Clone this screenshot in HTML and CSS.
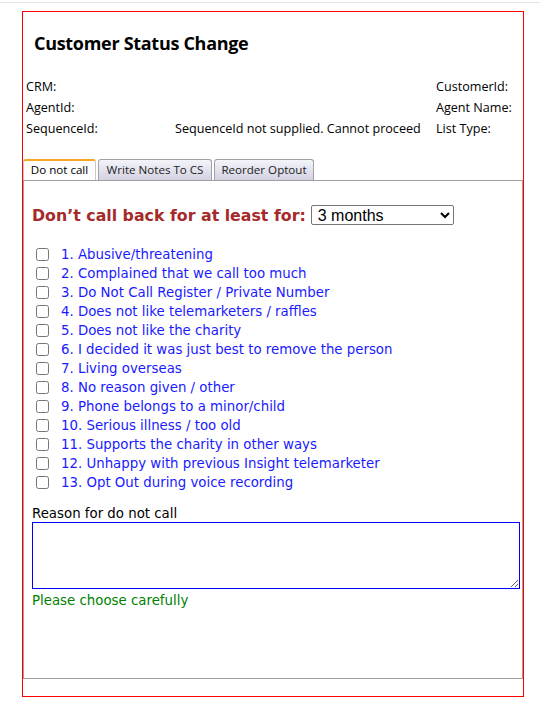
FILE: index.html
```html
<!DOCTYPE html>
<html>
<head>
<meta charset="utf-8">
<title>Customer Status Change</title>
<link rel="stylesheet" href="styles.css">
</head>
<body>
<div class="topline"></div>
<div class="frame">
  <h1 class="title">Customer Status Change</h1>
  <div class="info">
    <div class="info-left">
      <div class="row"><span class="lbl">CRM:</span><span class="val"></span></div>
      <div class="row"><span class="lbl">AgentId:</span><span class="val"></span></div>
      <div class="row"><span class="lbl">SequenceId:</span><span class="val">SequenceId not supplied. Cannot proceed</span></div>
    </div>
    <div class="info-right">
      <div class="row">CustomerId:</div>
      <div class="row">Agent Name:</div>
      <div class="row">List Type:</div>
    </div>
  </div>
  <div class="tabs">
    <div class="tab active">Do not call</div>
    <div class="tab">Write Notes To CS</div>
    <div class="tab">Reorder Optout</div>
  </div>
  <div class="panel">
    <div class="period">
      <span class="period-label">Don’t call back for at least for:</span>
      <select class="period-select"><option>3 months</option></select>
    </div>
    <ul class="reasons">
      <li><input type="checkbox"><span>1. Abusive/threatening</span></li>
      <li><input type="checkbox"><span>2. Complained that we call too much</span></li>
      <li><input type="checkbox"><span>3. Do Not Call Register / Private Number</span></li>
      <li><input type="checkbox"><span>4. Does not like telemarketers / raffles</span></li>
      <li><input type="checkbox"><span>5. Does not like the charity</span></li>
      <li><input type="checkbox"><span>6. I decided it was just best to remove the person</span></li>
      <li><input type="checkbox"><span>7. Living overseas</span></li>
      <li><input type="checkbox"><span>8. No reason given / other</span></li>
      <li><input type="checkbox"><span>9. Phone belongs to a minor/child</span></li>
      <li><input type="checkbox"><span>10. Serious illness / too old</span></li>
      <li><input type="checkbox"><span>11. Supports the charity in other ways</span></li>
      <li><input type="checkbox"><span>12. Unhappy with previous Insight telemarketer</span></li>
      <li><input type="checkbox"><span>13. Opt Out during voice recording</span></li>
    </ul>
    <div class="reason-label">Reason for do not call</div>
    <textarea class="reason-text"></textarea>
    <div class="hint">Please choose carefully</div>
  </div>
</div>
</body>
</html>
```
FILE: styles.css
```css
html, body {
  margin: 0;
  padding: 0;
  background: #ffffff;
}
body {
  font-family: "Open Sans", "Noto Sans", sans-serif;
  color: #000;
}
.topline {
  margin-top: 2px;
  width: 540px;
  border-top: 1px solid #e3e3e3;
}
.frame {
  box-sizing: border-box;
  width: 502px;
  height: 686px;
  margin: 8px 0 0 22px;
  border: 1px solid #ff0000;
  display: flex;
  flex-direction: column;
}
.title {
  margin: 19px 0 0 11px;
  font-family: "Open Sans", sans-serif;
  font-size: 18px;
  font-weight: 700;
  line-height: 24px;
  letter-spacing: -0.3px;
}
.info {
  display: flex;
  margin: 21px 0 0 3px;
  font-size: 12.6px;
}
.info-left {
  width: 410px;
}
.row {
  display: flex;
  height: 21px;
  line-height: 21px;
  white-space: nowrap;
}
.lbl {
  width: 149px;
}
.tabs {
  display: flex;
  gap: 2px;
  margin-top: 20px;
  height: 21px;
  font-family: "Open Sans", sans-serif;
  font-size: 11.6px;
}
.tab {
  box-sizing: border-box;
  height: 21px;
  line-height: 19px;
  text-align: center;
  white-space: nowrap;
  border: 1px solid #a0a0a8;
  border-bottom: none;
  border-radius: 3px 3px 0 0;
  background: linear-gradient(#f4f4fa, #d2d2e2);
  color: #222;
}
.tab.active {
  background: #fff;
  border-color: #c8c8c8;
  border-top: 2px solid #f5a623;
  line-height: 18px;
  color: #000;
}
.tab:nth-child(1) { width: 73px; }
.tab:nth-child(2) { width: 114px; }
.tab:nth-child(3) { width: 100px; }
.panel {
  box-sizing: border-box;
  height: 499px;
  border: 1px solid #a0a0a0;
  padding: 0 2px 0 8px;
  font-family: "DejaVu Sans", Verdana, sans-serif;
  font-size: 13.33px;
}
.period {
  display: flex;
  align-items: center;
  margin-top: 24px;
}
.period-label {
  color: #a52a2a;
  font-weight: 700;
  font-size: 15.8px;
  margin-right: 5px;
}
.period-select {
  width: 143px;
  height: 20px;
  font-family: "Liberation Sans", Arial, sans-serif;
  font-size: 16px;
  border: 1px solid #767676;
  border-radius: 2px;
  background: #fff;
  color: #000;
  padding: 0 0 0 2px;
}
.reasons {
  list-style: none;
  margin: 20px 0 0 0;
  padding: 0;
}
.reasons li {
  display: flex;
  align-items: center;
  height: 19px;
  color: #1a1aff;
}
.reasons input {
  width: 13px;
  height: 13px;
  margin: 0 12px 0 4px;
}
.reason-label {
  margin-top: 14px;
  line-height: 16px;
}
.reason-text {
  display: block;
  box-sizing: border-box;
  width: 488px;
  height: 67px;
  margin: 0;
  border: 1px solid #0000ff;
  resize: vertical;
}
.hint {
  color: #008000;
  margin-top: 4px;
  line-height: 16px;
}
```
